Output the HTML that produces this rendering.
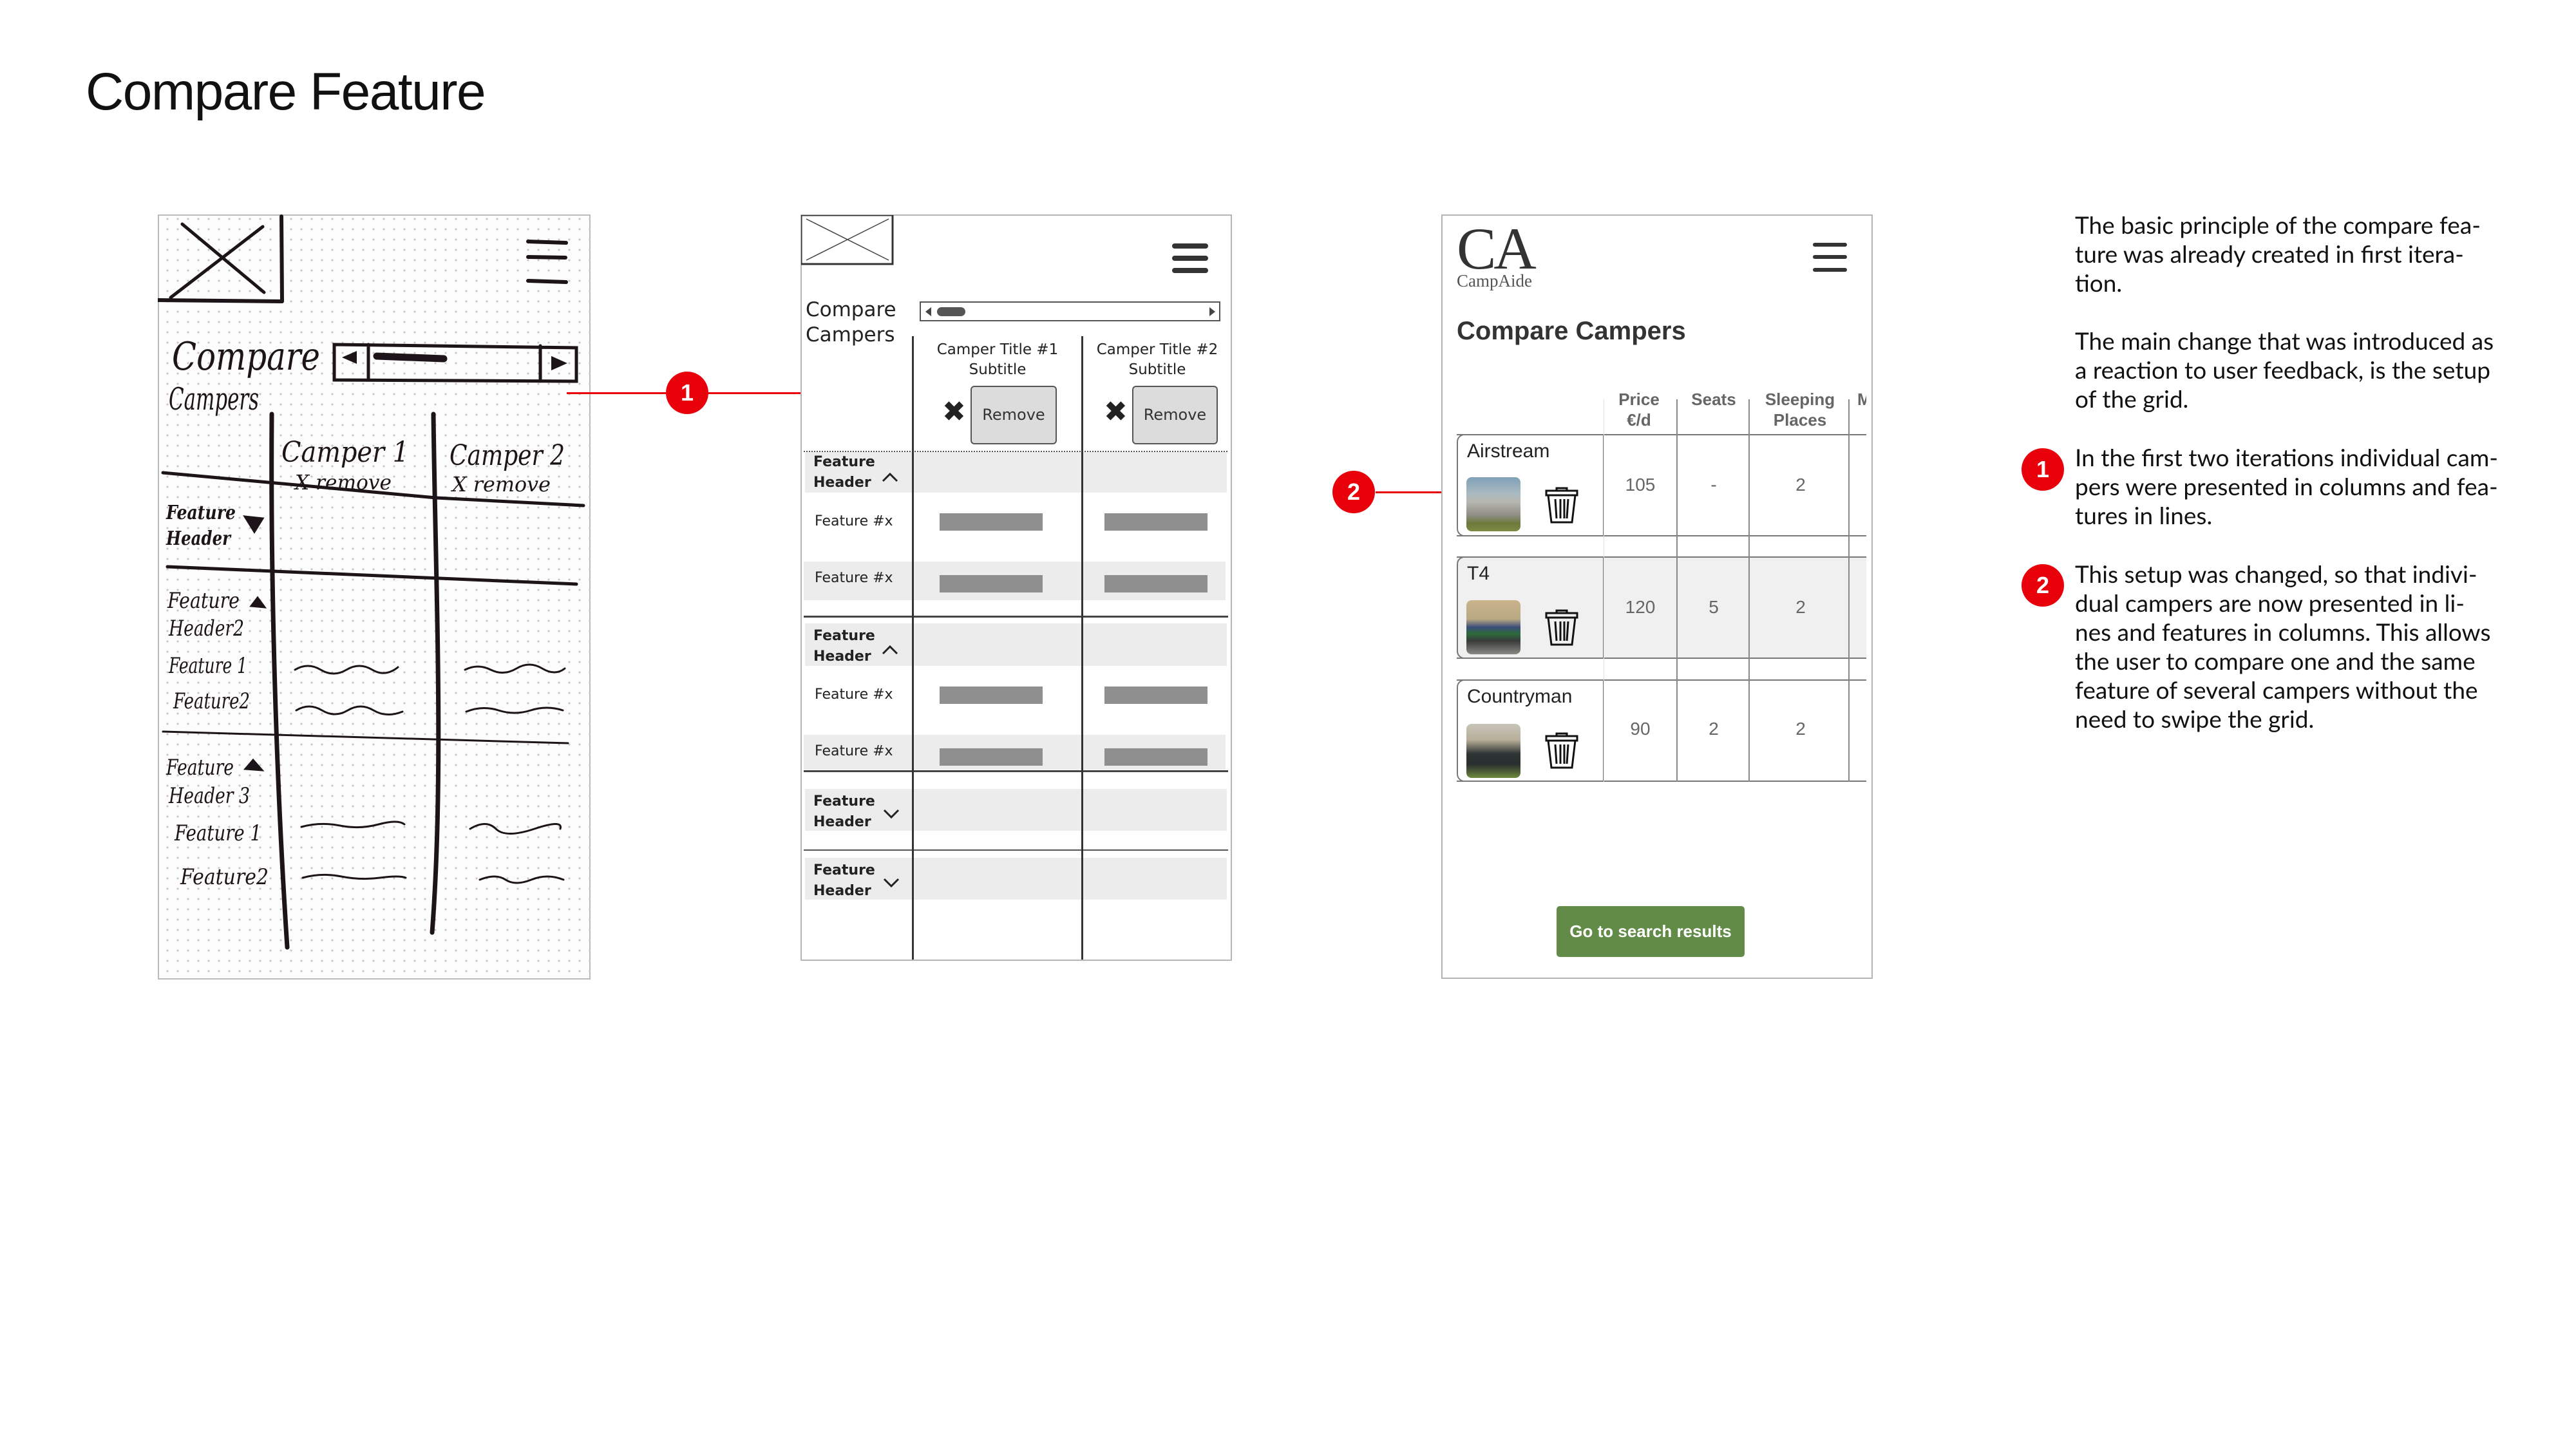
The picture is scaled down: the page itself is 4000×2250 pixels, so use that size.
<!DOCTYPE html>
<html><head><meta charset="utf-8">
<style>
*{margin:0;padding:0;box-sizing:border-box}
html,body{width:4000px;height:2250px;background:#fff;overflow:hidden;font-family:"Liberation Sans",sans-serif}
.a{position:absolute}
.title{left:133px;top:90px;font-size:82px;color:#111;letter-spacing:-1.5px;line-height:106px}
.frame{border:2px solid #b5b5b5;background:#fff}
.wf{font-family:"DejaVu Sans","Liberation Sans",sans-serif;color:#222}
.gray{background:#ececec}
.bar{background:#8f8f8f;height:27px;width:160px}
.fh{font-weight:bold;font-size:22px;line-height:32px;left:1263px;color:#222;white-space:nowrap}
.fx{font-size:22px;left:1265px;color:#222;white-space:nowrap}
.vl{background:#333;width:3px}
.hl{background:#444;height:3px}
.btn{background:#dcdcdc;border:2px solid #555;border-radius:6px;font-size:24px;text-align:center;line-height:86px;color:#333}
.xic{font-size:44px;font-weight:bold;color:#222}
.row{border-top:2px solid #777;border-bottom:2px solid #777;left:2262px;width:636px}
.card{border:2px solid #777;border-radius:12px 0 0 12px;border-right:2px solid #777}
.nm{font-size:30px;color:#222}
.val{font-size:28px;color:#666;text-align:center;width:100px}
.cv{background:#888;width:2px}
.hd{font-size:26px;font-weight:bold;color:#666;text-align:center;line-height:32px}
.txt{left:3222px;font-family:"Lato","Liberation Sans",sans-serif;font-size:37px;line-height:45px;color:#111;white-space:nowrap}
.mk{width:66px;height:66px;border-radius:50%;background:#e8000b;color:#fff;font-weight:bold;font-size:36px;text-align:center;line-height:66px}
.red{background:#e8000b;height:3px}
.hw{font-family:"DejaVu Serif","Liberation Serif",serif;font-style:italic;fill:#1c1418}
</style></head><body>

<div class="a title">Compare Feature</div>

<!-- SKETCH -->
<svg class="a" style="left:245px;top:333px" width="672" height="1188" viewBox="245 333 672 1188">
<defs><pattern id="dots" x="0" y="0" width="16" height="16" patternUnits="userSpaceOnUse"><circle cx="4" cy="4" r="1.6" fill="#c8c8c8"/></pattern></defs>
<rect x="246" y="334" width="670" height="1186" fill="#fcfcfc" stroke="#bbb" stroke-width="2"/>
<rect x="246" y="334" width="670" height="1186" fill="url(#dots)"/>
<g stroke="#1c1418" fill="none" stroke-linecap="round">
<path d="M246 466 L437 468 M437 336 L438 468" stroke-width="6"/>
<path d="M265 462 L408 352 M283 348 L410 454" stroke-width="5"/>
<path d="M820 375 L879 377 M820 399 L878 400 M820 436 L879 438" stroke-width="6"/>
<path d="M519 535 L895 540 L895 592 L519 590 Z M572 535 L572 590 M839 537 L839 592" stroke-width="5"/>
<path d="M585 553 L689 557" stroke-width="11"/>
<path d="M536 555 L552 548 L552 562 Z M858 556 L876 564 L858 572 Z" stroke-width="4" fill="#1c1418"/>
<path d="M422 643 C420 900 428 1200 446 1471" stroke-width="7"/>
<path d="M673 643 C676 900 690 1200 671 1448" stroke-width="7"/>
<path d="M253 734 L677 773 L906 785" stroke-width="5"/>
<path d="M260 880 L895 907" stroke-width="5"/>
<path d="M253 1136 L882 1154" stroke-width="3"/>
<path d="M458 1040 q20 -12 40 0 t40 0 t40 0 t40 -4 M460 1103 q20 -12 40 0 t40 0 t40 0 t45 2 M468 1284 q30 -8 60 -2 t60 -2 t40 0 M470 1363 q30 -8 60 -2 t60 2 t40 0" stroke-width="3"/>
<path d="M722 1040 q20 -10 40 0 t40 -2 t40 0 t35 0 M724 1105 q25 -10 50 -2 t50 0 t50 0 M730 1287 q25 -15 40 0 t60 0 t40 0 M745 1366 q25 -10 40 0 t40 0 t50 0" stroke-width="3"/>
<path d="M380 802 L408 805 L395 826 Z" fill="#1c1418" stroke-width="3"/>
<path d="M390 941 L400 928 L411 943 Z M381 1194 L393 1180 L407 1196 Z" fill="#1c1418" stroke-width="3"/>
</g>
<text class="hw" x="267" y="574" font-size="60" textLength="230" lengthAdjust="spacingAndGlyphs">Compare</text>
<text class="hw" x="262" y="636" font-size="48" textLength="140" lengthAdjust="spacingAndGlyphs">Campers</text>
<text class="hw" x="437" y="717" font-size="44" textLength="198" lengthAdjust="spacingAndGlyphs">Camper 1</text>
<text class="hw" x="458" y="760" font-size="32" textLength="150" lengthAdjust="spacingAndGlyphs">X remove</text>
<text class="hw" x="698" y="722" font-size="44" textLength="179" lengthAdjust="spacingAndGlyphs">Camper 2</text>
<text class="hw" x="702" y="763" font-size="32" textLength="153" lengthAdjust="spacingAndGlyphs">X remove</text>
<text class="hw" x="258" y="806" font-size="30" font-weight="bold" textLength="108" lengthAdjust="spacingAndGlyphs">Feature</text>
<text class="hw" x="258" y="846" font-size="30" font-weight="bold" textLength="100" lengthAdjust="spacingAndGlyphs">Header</text>
<text class="hw" x="260" y="944" font-size="34" textLength="112" lengthAdjust="spacingAndGlyphs">Feature</text>
<text class="hw" x="262" y="987" font-size="34" textLength="117" lengthAdjust="spacingAndGlyphs">Header2</text>
<text class="hw" x="262" y="1045" font-size="34" textLength="122" lengthAdjust="spacingAndGlyphs">Feature 1</text>
<text class="hw" x="269" y="1100" font-size="34" textLength="119" lengthAdjust="spacingAndGlyphs">Feature2</text>
<text class="hw" x="258" y="1203" font-size="34" textLength="105" lengthAdjust="spacingAndGlyphs">Feature</text>
<text class="hw" x="262" y="1247" font-size="34" textLength="126" lengthAdjust="spacingAndGlyphs">Header 3</text>
<text class="hw" x="271" y="1305" font-size="34" textLength="135" lengthAdjust="spacingAndGlyphs">Feature 1</text>
<text class="hw" x="280" y="1373" font-size="34" textLength="137" lengthAdjust="spacingAndGlyphs">Feature2</text>
</svg>

<!-- marker 1 -->
<div class="a red" style="left:880px;top:609px;width:402px"></div>
<div class="a mk" style="left:1034px;top:577px">1</div>

<!-- WIREFRAME 2 -->
<div class="a frame" style="left:1243px;top:333px;width:670px;height:1159px"></div>
<div class="a wf">
<svg class="a" style="left:1244px;top:334px" width="144" height="78"><rect x="0" y="0" width="142" height="76" fill="#fff" stroke="#333" stroke-width="3"/><path d="M8 6 L136 70 M8 70 L136 6" stroke="#444" stroke-width="1.5"/></svg>
<div class="a" style="left:1820px;top:378px;width:56px;height:8px;background:#333;border-radius:4px"></div>
<div class="a" style="left:1820px;top:397px;width:56px;height:8px;background:#333;border-radius:4px"></div>
<div class="a" style="left:1820px;top:416px;width:56px;height:8px;background:#333;border-radius:4px"></div>
<div class="a" style="left:1251px;top:462px;font-size:31px;line-height:39px;color:#222">Compare<br>Campers</div>
<div class="a" style="left:1428px;top:468px;width:467px;height:31px;border:2px solid #555;background:#fff"></div>
<div class="a" style="left:1455px;top:477px;width:44px;height:14px;border-radius:7px;background:#555"></div>
<div class="a" style="left:1437px;top:477px;width:0;height:0;border-top:7px solid transparent;border-bottom:7px solid transparent;border-right:9px solid #444"></div>
<div class="a" style="left:1878px;top:477px;width:0;height:0;border-top:7px solid transparent;border-bottom:7px solid transparent;border-left:9px solid #444"></div>
<div class="a gray" style="left:1250px;top:702px;width:655px;height:63px"></div>
<div class="a gray" style="left:1248px;top:872px;width:655px;height:60px"></div>
<div class="a gray" style="left:1250px;top:968px;width:655px;height:66px"></div>
<div class="a gray" style="left:1248px;top:1141px;width:655px;height:54px"></div>
<div class="a gray" style="left:1250px;top:1225px;width:655px;height:65px"></div>
<div class="a gray" style="left:1250px;top:1332px;width:655px;height:65px"></div>
<div class="a" style="left:1248px;top:700px;width:658px;border-top:2px dotted #555"></div>
<div class="a hl" style="left:1248px;top:956px;width:659px"></div>
<div class="a hl" style="left:1248px;top:1196px;width:659px"></div>
<div class="a" style="left:1248px;top:1319px;width:659px;height:2px;background:#555"></div>
<div class="a vl" style="left:1416px;top:522px;height:968px"></div>
<div class="a vl" style="left:1679px;top:522px;height:968px"></div>
<div class="a" style="left:1420px;top:528px;width:258px;text-align:center;font-size:23px;line-height:31px">Camper Title #1<br>Subtitle</div>
<div class="a" style="left:1683px;top:528px;width:228px;text-align:center;font-size:23px;line-height:31px">Camper Title #2<br>Subtitle</div>
<div class="a xic" style="left:1463px;top:614px">✖</div>
<div class="a btn" style="left:1507px;top:599px;width:134px;height:91px">Remove</div>
<div class="a xic" style="left:1714px;top:614px">✖</div>
<div class="a btn" style="left:1758px;top:599px;width:133px;height:91px">Remove</div>
<div class="a fh" style="top:702px">Feature<br>Header</div>
<div class="a fh" style="top:972px">Feature<br>Header</div>
<div class="a fh" style="top:1229px">Feature<br>Header</div>
<div class="a fh" style="top:1336px">Feature<br>Header</div>
<svg class="a" style="left:1368px;top:732px" width="28" height="18"><path d="M3 15 L14 4 L25 15" stroke="#222" stroke-width="3" fill="none"/></svg>
<svg class="a" style="left:1368px;top:1000px" width="28" height="18"><path d="M3 15 L14 4 L25 15" stroke="#222" stroke-width="3" fill="none"/></svg>
<svg class="a" style="left:1370px;top:1254px" width="28" height="18"><path d="M3 4 L14 15 L25 4" stroke="#222" stroke-width="3" fill="none"/></svg>
<svg class="a" style="left:1370px;top:1361px" width="28" height="18"><path d="M3 4 L14 15 L25 4" stroke="#222" stroke-width="3" fill="none"/></svg>
<div class="a fx" style="top:797px">Feature #x</div>
<div class="a fx" style="top:885px">Feature #x</div>
<div class="a fx" style="top:1066px">Feature #x</div>
<div class="a fx" style="top:1154px">Feature #x</div>
<div class="a bar" style="left:1459px;top:797px"></div><div class="a bar" style="left:1715px;top:797px"></div>
<div class="a bar" style="left:1459px;top:893px"></div><div class="a bar" style="left:1715px;top:893px"></div>
<div class="a bar" style="left:1459px;top:1066px"></div><div class="a bar" style="left:1715px;top:1066px"></div>
<div class="a bar" style="left:1459px;top:1162px"></div><div class="a bar" style="left:1715px;top:1162px"></div>
</div>

<!-- marker 2 -->
<div class="a red" style="left:2136px;top:763px;width:130px"></div>
<div class="a mk" style="left:2069px;top:731px">2</div>

<!-- WIREFRAME 3 -->
<div class="a frame" style="left:2238px;top:333px;width:670px;height:1187px"></div>
<div class="a" style="left:2262px;top:340px;font-family:'Liberation Serif',serif;font-size:92px;line-height:92px;color:#333;letter-spacing:-4px">CA</div>
<div class="a" style="left:2262px;top:421px;font-family:'Liberation Serif',serif;font-size:27px;color:#555">CampAide</div>
<div class="a" style="left:2815px;top:377px;width:53px;height:6px;background:#333;border-radius:3px"></div>
<div class="a" style="left:2815px;top:396px;width:53px;height:6px;background:#333;border-radius:3px"></div>
<div class="a" style="left:2815px;top:416px;width:53px;height:6px;background:#333;border-radius:3px"></div>
<div class="a" style="left:2262px;top:492px;font-size:40px;font-weight:bold;color:#333">Compare Campers</div>
<div class="a hd" style="left:2495px;top:604px;width:100px">Price<br>€/d</div>
<div class="a hd" style="left:2611px;top:604px;width:100px">Seats</div>
<div class="a hd" style="left:2722px;top:604px;width:146px">Sleeping<br>Places</div>
<div class="a" style="left:2884px;top:604px;width:14px;overflow:hidden"><div class="hd" style="width:60px;text-align:left">M</div></div>
<div class="a row" style="top:674px;height:159px"></div>
<div class="a row" style="top:864px;height:159px;background:#f0f0f0"></div>
<div class="a row" style="top:1055px;height:159px"></div>
<div class="a card" style="left:2262px;top:674px;width:229px;height:159px;background:#fff"></div>
<div class="a card" style="left:2262px;top:864px;width:229px;height:159px;background:#f0f0f0"></div>
<div class="a card" style="left:2262px;top:1055px;width:229px;height:159px;background:#fff"></div>
<div class="a" style="left:2490px;top:620px;width:1px;height:594px;background:#e4e4e4"></div>
<div class="a cv" style="left:2603px;top:620px;height:594px"></div>
<div class="a cv" style="left:2715px;top:620px;height:594px"></div>
<div class="a cv" style="left:2870px;top:620px;height:594px"></div>
<div class="a nm" style="left:2278px;top:684px">Airstream</div>
<div class="a nm" style="left:2278px;top:874px">T4</div>
<div class="a nm" style="left:2278px;top:1065px">Countryman</div>
<div class="a" style="left:2277px;top:741px;width:84px;height:84px;border-radius:8px;background:linear-gradient(#7fa0b8 0,#a9b9c0 30%,#b8b8b2 45%,#8f8d84 70%,#6b7a3c 85%,#7c8a44 100%)"></div>
<div class="a" style="left:2277px;top:932px;width:84px;height:84px;border-radius:8px;background:linear-gradient(#c9b48c 0,#b8a882 35%,#3b4d7a 50%,#2c6b3a 62%,#3a3a3a 75%,#8a8a86 100%)"></div>
<div class="a" style="left:2277px;top:1124px;width:84px;height:84px;border-radius:8px;background:linear-gradient(#c8c4ba 0,#b7ae98 30%,#2f3434 55%,#2a2e2e 75%,#6d8a3e 100%)"></div>
<svg class="a" style="left:2399px;top:756px" width="52" height="58" viewBox="0 0 52 58"><g fill="none" stroke="#111" stroke-width="3"><path d="M18 6 V2 H34 V6"/><rect x="2" y="6" width="48" height="7"/><path d="M5 13 L10 55 H42 L47 13"/><path d="M16 19 L18 49 M24 19 V49 M30 19 V49 M36 19 L34 49"/></g></svg>
<svg class="a" style="left:2399px;top:946px" width="52" height="58" viewBox="0 0 52 58"><g fill="none" stroke="#111" stroke-width="3"><path d="M18 6 V2 H34 V6"/><rect x="2" y="6" width="48" height="7"/><path d="M5 13 L10 55 H42 L47 13"/><path d="M16 19 L18 49 M24 19 V49 M30 19 V49 M36 19 L34 49"/></g></svg>
<svg class="a" style="left:2399px;top:1137px" width="52" height="58" viewBox="0 0 52 58"><g fill="none" stroke="#111" stroke-width="3"><path d="M18 6 V2 H34 V6"/><rect x="2" y="6" width="48" height="7"/><path d="M5 13 L10 55 H42 L47 13"/><path d="M16 19 L18 49 M24 19 V49 M30 19 V49 M36 19 L34 49"/></g></svg>
<div class="a val" style="left:2497px;top:737px">105</div>
<div class="a val" style="left:2611px;top:737px">-</div>
<div class="a val" style="left:2746px;top:737px">2</div>
<div class="a val" style="left:2497px;top:927px">120</div>
<div class="a val" style="left:2611px;top:927px">5</div>
<div class="a val" style="left:2746px;top:927px">2</div>
<div class="a val" style="left:2497px;top:1116px">90</div>
<div class="a val" style="left:2611px;top:1116px">2</div>
<div class="a val" style="left:2746px;top:1116px">2</div>
<div class="a" style="left:2417px;top:1407px;width:292px;height:79px;background:#628b47;border-radius:5px;color:#fff;font-size:26px;font-weight:bold;text-align:center;line-height:79px;white-space:nowrap">Go to search results</div>

<!-- TEXT -->
<div class="a txt" style="top:326px">The basic principle of the compare fea-<br>ture was already created in first itera-<br>tion.</div>
<div class="a txt" style="top:506px">The main change that was introduced as<br>a reaction to user feedback, is the setup<br>of the grid.</div>
<div class="a mk" style="left:3139px;top:696px">1</div>
<div class="a txt" style="top:687px">In the first two iterations individual cam-<br>pers were presented in columns and fea-<br>tures in lines.</div>
<div class="a mk" style="left:3139px;top:876px">2</div>
<div class="a txt" style="top:868px">This setup was changed, so that indivi-<br>dual campers are now presented in li-<br>nes and features in columns. This allows<br>the user to compare one and the same<br>feature of several campers without the<br>need to swipe the grid.</div>
</body></html>
